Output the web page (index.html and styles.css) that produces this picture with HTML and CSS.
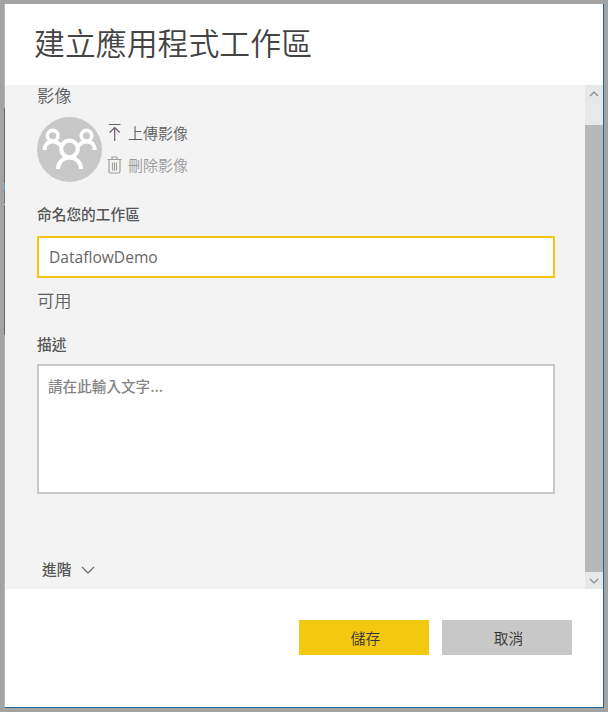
FILE: index.html
```html
<!DOCTYPE html>
<html lang="zh-Hant">
<head>
<meta charset="utf-8">
<title>建立應用程式工作區</title>
<link rel="stylesheet" href="styles.css">
</head>
<body>
<div class="edge"></div>
<main class="dialog">
  <header class="header"><h1>建立應用程式工作區</h1></header>
  <div class="body">
    <form class="form">
      <div class="section-title">影像</div>
      <div class="image-row">
        <svg class="avatar" viewBox="0 0 65 65" fill="none" stroke="#fff" stroke-width="4">
          <circle cx="32.5" cy="32.5" r="32.5" fill="#c8c8c8" stroke="none"/>
          <circle cx="15.700" cy="18.700" r="5.300" stroke-width="3.600"/>
          <circle cx="49.500" cy="18.700" r="5.300" stroke-width="3.600"/>
          <path d="M7.500 33c0-5 3.400-8.500 8.200-8.500 4.100 0 6.400 2.200 8.500 4.600M57.800 33c0-5-3.400-8.500-8.200-8.500-4.100 0-6.400 2.200-8.500 4.600"/>
          <circle cx="32.500" cy="31.900" r="8.300"/>
          <path d="M21 52c0-6.500 4.600-11.500 11.500-11.500s11.500 5 11.500 11.500"/>
        </svg>
        <div class="actions">
          <div class="action">
            <svg class="icon" viewBox="0 0 16 20" fill="none" stroke="#6b5b6b" stroke-width="1.200"><path d="M2 2.500h11.500M7.700 19V5.500M2.700 10.500l5-5 5 5"/></svg>
            <span>上傳影像</span>
          </div>
          <div class="action disabled">
            <svg class="icon" viewBox="0 0 16 20" fill="none" stroke="#a29f9a" stroke-width="1.200"><path d="M.5 5.500h14M5 5V3h5v2M2 6v11.500q0 1.500 1.500 1.500h8q1.500 0 1.500-1.500V6M5.500 8.500v8M7.500 8.500v8M9.500 8.500v8"/></svg>
            <span>刪除影像</span>
          </div>
        </div>
      </div>
      <label class="label name-label" for="name">命名您的工作區</label>
      <input class="name" id="name" type="text" value="DataflowDemo">
      <div class="status">可用</div>
      <label class="label desc-label" for="desc">描述</label>
      <textarea class="desc" id="desc" placeholder="請在此輸入文字..."></textarea>
      <div class="advanced">
        <span>進階</span>
        <svg class="chevron" viewBox="0 0 14 8" fill="none" stroke="#77707c" stroke-width="1.300"><path d="M1 1l6 6 6-6"/></svg>
      </div>
    </form>
    <div class="scrollbar">
      <div class="scroll-up"><svg class="arrow" viewBox="0 0 10 6" fill="none" stroke="#888" stroke-width="1.200"><path d="M1 5l4-4 4 4"/></svg></div>
      <div class="thumb"></div>
      <div class="scroll-down"><svg class="arrow" viewBox="0 0 10 6" fill="none" stroke="#888" stroke-width="1.200"><path d="M1 1l4 4 4-4"/></svg></div>
    </div>
  </div>
  <footer class="footer">
    <button class="button primary" type="button">儲存</button>
    <button class="button" type="button">取消</button>
  </footer>
</main>
</body>
</html>
```
FILE: styles.css
```css
* { box-sizing: border-box; }

body {
  margin: 0;
  width: 608px;
  height: 712px;
  overflow: hidden;
  display: flex;
  padding: 4px;
  background: #a3a3a3;
  color: #606060;
  font-family: "Noto Sans CJK TC", sans-serif;
}

.edge {
  width: 1px;
  height: 703px;
  background: linear-gradient(#b5b5b5 104px, #686868 104px 179px, #50a5c9 179px 186px, #777 186px 200px, #ccc 200px 201px, #686868 201px 331px, #b5b5b5 331px);
}

.dialog {
  width: 599px;
  height: 704px;
  display: flex;
  flex-direction: column;
  background: #fff;
  border-right: 1px solid #1f659a;
  border-bottom: 1px solid #1f659a;
}

.header { height: 81px; padding: 17px 0 0 29px; }

h1 {
  margin: 0;
  font-size: 30.9px;
  line-height: 42px;
  font-weight: 350;
  color: #444;
}

.body { display: flex; height: 504px; background: #f3f3f3; }

.form { width: 580px; padding-left: 32px; }

.section-title, .status {
  font-size: 17.3px;
  line-height: 22px;
  font-weight: 350;
  color: #606060;
}

.section-title { margin-top: -1px; }

.image-row { display: flex; gap: 5px; margin-top: 11px; }
.avatar { width: 65px; height: 65px; }
.actions { display: flex; flex-direction: column; margin-top: -1px; }

.action {
  display: flex;
  align-items: center;
  gap: 5px;
  height: 32px;
  font-size: 15px;
  font-weight: 350;
}

.icon { width: 16px; height: 20px; }
.disabled { color: #999; }

.label {
  display: block;
  font-size: 14.7px;
  line-height: 20px;
  font-weight: 500;
  color: #555;
}

.name-label { margin: 22px 0 12px; }

.name, .desc {
  display: block;
  width: 518px;
  margin: 0;
  background: #fff;
  outline: none;
  border-radius: 0;
}

.name {
  height: 42px;
  padding: 0 10px;
  border: 2px solid #f2c511;
  font-family: "Open Sans", sans-serif;
  font-size: 15.6px;
  color: #666;
}

.status { margin-top: 11px; }
.desc-label { margin: 23px 0 10px; }

.desc {
  height: 130px;
  padding: 10px 9px;
  border: 2px solid #c8c8c8;
  resize: none;
  font-family: inherit;
  font-size: 14.6px;
  line-height: 20px;
  font-weight: 500;
}

.desc::placeholder { color: #858585; opacity: 1; }

.advanced {
  display: flex;
  align-items: center;
  gap: 10px;
  margin: 65px 0 0 5px;
  font-size: 14.7px;
  line-height: 20px;
  font-weight: 500;
  color: #555;
}

.chevron { width: 14px; height: 8px; margin-top: 1px; }

.scrollbar { display: flex; flex-direction: column; width: 18px; background: #e8e8e8; }
.scroll-up { height: 40px; padding-top: 6px; }
.thumb { height: 447px; background: #b8b8b8; }
.scroll-down { height: 17px; padding-top: 6px; }
.arrow { display: block; width: 10px; height: 6px; margin-left: 4px; }

.footer { display: flex; gap: 13px; padding: 31px 0 0 294px; }

.button {
  width: 130px;
  height: 35px;
  padding: 0 3px 0 6px;
  border: 0;
  background: #c8c8c8;
  color: #333;
  font-family: inherit;
  font-size: 14.7px;
  font-weight: 350;
}

.primary { background: #f2c811; }
```
